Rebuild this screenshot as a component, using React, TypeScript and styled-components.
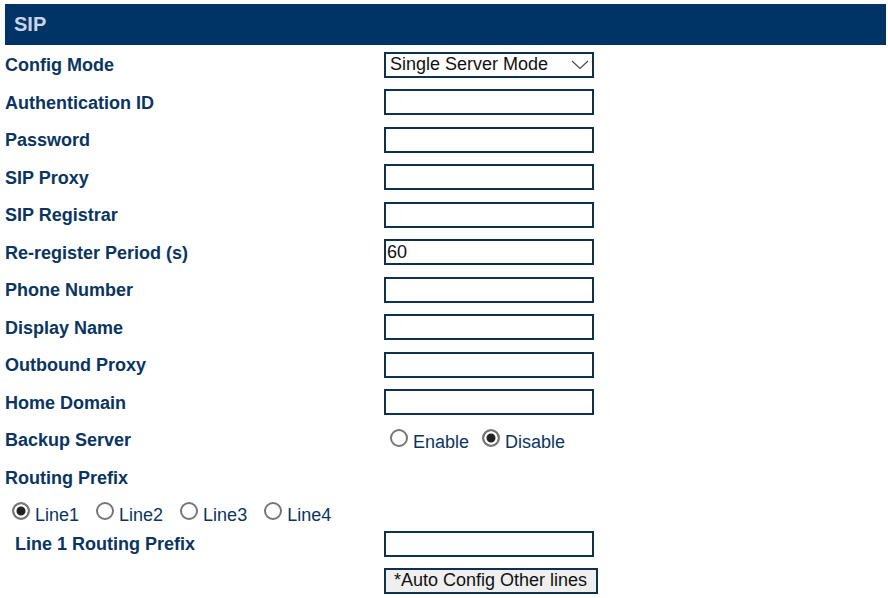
import React from "react";
import styled, { createGlobalStyle } from "styled-components";

const GlobalStyle = createGlobalStyle`
    body {
        margin: 0;
        background: #ffffff;
        font-family: "Liberation Sans", Arial, sans-serif;
    }
`;

const Page = styled.div`
    padding: 4px 2px 0 5px;
    width: 881px;
`;

const Header = styled.div`
    height: 41px;
    background: #003366;
    color: #c9d5e6;
    font-size: 20px;
    font-weight: bold;
    display: flex;
    align-items: center;
    padding-left: 9px;
    margin-bottom: 1px;
`;

const Row = styled.div<{ $h?: number }>`
    display: flex;
    align-items: center;
    height: ${(p) => p.$h ?? 37.5}px;
`;

const Label = styled.div<{ $indent?: number }>`
    width: ${(p) => 379 - (p.$indent ?? 0)}px;
    padding-left: ${(p) => p.$indent ?? 0}px;
    padding-top: 2px;
    color: #0b3561;
    font-size: 18px;
    font-weight: bold;
    flex-shrink: 0;
`;

const TextInput = styled.input`
    box-sizing: border-box;
    width: 210px;
    height: 26px;
    border: 2px solid #0f3150;
    border-radius: 0;
    padding: 0 1px;
    font-family: "Liberation Sans", Arial, sans-serif;
    font-size: 18px;
    color: #111;
    outline: none;
`;

const Select = styled.div`
    box-sizing: border-box;
    width: 210px;
    height: 26px;
    border: 2px solid #0f3150;
    display: flex;
    align-items: center;
    justify-content: space-between;
    padding: 0 3px 0 4px;
    font-size: 18px;
    color: #111;
`;

const RadioGroup = styled.div<{ $gap: number; $left?: number }>`
    display: flex;
    align-items: center;
    gap: ${(p) => p.$gap}px;
    padding-left: ${(p) => p.$left ?? 0}px;
`;

const RadioItem = styled.label`
    display: flex;
    align-items: center;
    gap: 5px;
    color: #0b3561;
    font-size: 18px;
`;

const RadioDot = styled.span<{ $on?: boolean }>`
    box-sizing: border-box;
    width: 18px;
    height: 18px;
    border-radius: 50%;
    border: 2px solid #767676;
    background: ${(p) => (p.$on ? "#222" : "#fff")};
    box-shadow: ${(p) => (p.$on ? "inset 0 0 0 2.5px #fff" : "none")};
    margin-top: -3px;
`;

const RadioText = styled.span`
    line-height: 1;
    padding-top: 4px;
`;

const Button = styled.button`
    box-sizing: border-box;
    width: 214px;
    height: 26px;
    border: 2px solid #0f3150;
    background: #efefef;
    font-family: "Liberation Sans", Arial, sans-serif;
    font-size: 18px;
    color: #111;
    padding: 0 0 0 8px;
    text-align: left;
    white-space: nowrap;
`;

const Spacer = styled.div`
    width: 379px;
    flex-shrink: 0;
`;

const Chevron = () => (
    <svg width="18" height="10" viewBox="0 0 18 10">
        <path d="M1 1 L9 8.5 L17 1" fill="none" stroke="#444" strokeWidth="1.1" />
    </svg>
);

const fields: [string, string][] = [
    ["Authentication ID", ""],
    ["Password", ""],
    ["SIP Proxy", ""],
    ["SIP Registrar", ""],
    ["Re-register Period (s)", "60"],
    ["Phone Number", ""],
    ["Display Name", ""],
    ["Outbound Proxy", ""],
    ["Home Domain", ""],
];

const Radio = ({ text, on }: { text: string; on?: boolean }) => (
    <RadioItem>
        <RadioDot $on={on} />
        <RadioText>{text}</RadioText>
    </RadioItem>
);

export default function App() {
    return (
        <Page>
            <GlobalStyle />
            <Header>SIP</Header>
            <Row>
                <Label>Config Mode</Label>
                <Select>
                    <span>Single Server Mode</span>
                    <Chevron />
                </Select>
            </Row>
            {fields.map(([name, value]) => (
                <Row key={name}>
                    <Label>{name}</Label>
                    <TextInput type={name === "Password" ? "password" : "text"} defaultValue={value} />
                </Row>
            ))}
            <Row>
                <Label>Backup Server</Label>
                <RadioGroup $gap={13} $left={6}>
                    <Radio text="Enable" />
                    <Radio text="Disable" on />
                </RadioGroup>
            </Row>
            <Row $h={38}>
                <Label>Routing Prefix</Label>
            </Row>
            <Row $h={32}>
                <RadioGroup $gap={17} $left={7}>
                    <Radio text="Line1" on />
                    <Radio text="Line2" />
                    <Radio text="Line3" />
                    <Radio text="Line4" />
                </RadioGroup>
            </Row>
            <Row $h={30}>
                <Label $indent={10}>Line 1 Routing Prefix</Label>
                <TextInput type="text" />
            </Row>
            <Row $h={44}>
                <Spacer />
                <Button>*Auto Config Other lines</Button>
            </Row>
        </Page>
    );
}
